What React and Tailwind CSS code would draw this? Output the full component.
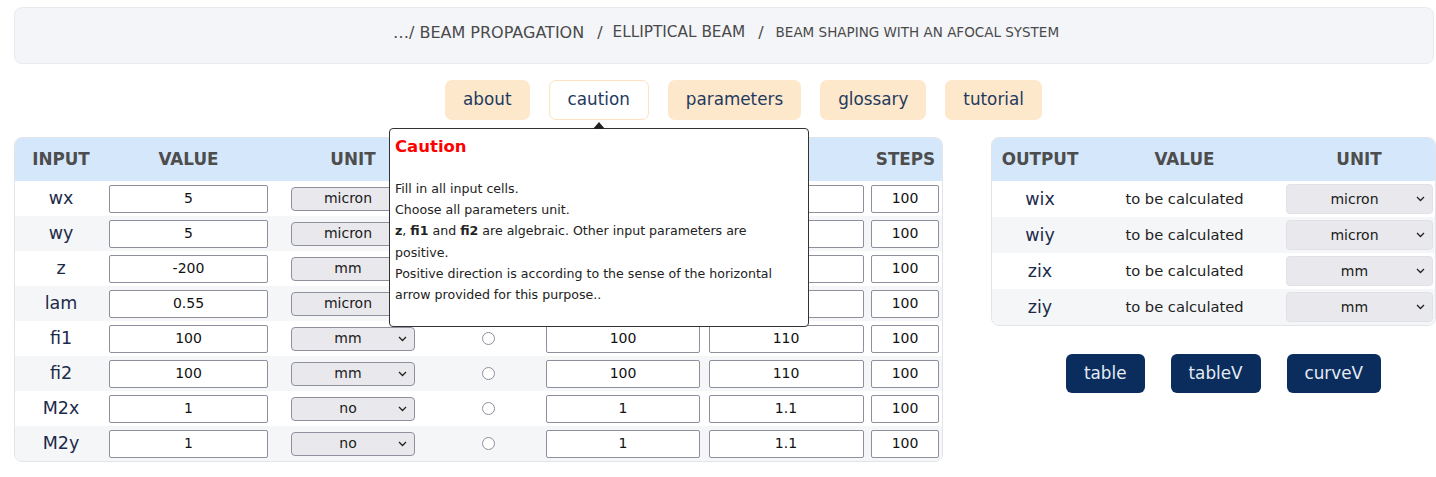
import React from "react";

const font = { fontFamily: '"DejaVu Sans", "Liberation Sans", sans-serif' };

function Chevron() {
  return (
    <svg width="9" height="6" viewBox="0 0 9 6" className="absolute right-[7px] top-1/2 -translate-y-1/2">
      <path d="M1 1 L4.5 4.5 L8 1" fill="none" stroke="#222" strokeWidth="1.3" />
    </svg>
  );
}

function Select({ value, w = "w-[124px]", h = "h-[24px]", border = "border-[#8f8f9d]" }) {
  return (
    <div className={`relative ${w} ${h} bg-[#e9e9ed] border ${border} rounded-[4px] flex items-center justify-center text-[14px] text-[#1a1a1a]`}>
      <span className="pr-[10px]">{value}</span>
      <Chevron />
    </div>
  );
}

function Input({ value, w }) {
  return (
    <div className={`${w} h-[28px] bg-white border border-[#8f8f9d] rounded-[2px] flex items-center justify-center text-[14px] text-[#111]`}>
      {value}
    </div>
  );
}

function Radio() {
  return <div className="w-[13px] h-[13px] rounded-full border border-[#8f8f9d] bg-white" />;
}

const inputRows = [
  ["wx", "5", "micron", "", "", "100"],
  ["wy", "5", "micron", "", "", "100"],
  ["z", "-200", "mm", "", "", "100"],
  ["lam", "0.55", "micron", "", "", "100"],
  ["fi1", "100", "mm", "100", "110", "100"],
  ["fi2", "100", "mm", "100", "110", "100"],
  ["M2x", "1", "no", "1", "1.1", "100"],
  ["M2y", "1", "no", "1", "1.1", "100"],
];

const outputRows = [
  ["wix", "micron"],
  ["wiy", "micron"],
  ["zix", "mm"],
  ["ziy", "mm"],
];

const inCols = "grid grid-cols-[92px_163px_166px_105px_164px_162px_77px]";
const outCols = "grid grid-cols-[96px_193px_156px]";

export default function App() {
  return (
    <div className="w-[1436px] h-[477px] bg-white overflow-hidden relative" style={font}>
      {/* breadcrumb */}
      <div className="ml-[14px] mr-[2px] mt-[7px] h-[57px] pb-[6px] pl-[4px] bg-[#f4f5f9] border border-[#e8eaef] rounded-[8px] flex items-center justify-center text-[#4a4a4a]">
        <span className="text-[16px]">…/ BEAM PROPAGATION</span>
        <span className="text-[16px] ml-[13px] mr-[10px]">/</span>
        <span className="text-[15.3px]">ELLIPTICAL BEAM</span>
        <span className="text-[16px] ml-[13px] mr-[12px]">/</span>
        <span className="text-[13.5px]">BEAM SHAPING WITH AN AFOCAL SYSTEM</span>
      </div>

      {/* tabs */}
      <div className="mt-[16px] flex justify-center gap-[19px] pl-[51px]">
        {["about", "caution", "parameters", "glossary", "tutorial"].map((t) => (
          <div
            key={t}
            className={`h-[40px] px-[18px] rounded-[7px] flex items-center text-[16.8px] text-[#1f3a60] ${
              t === "caution" ? "bg-white border border-[#fbe3c2]" : "bg-[#fde8cb]"
            }`}
          >
            {t}
          </div>
        ))}
      </div>

      {/* main */}
      <div className="mt-[17px] ml-[14px] flex gap-[48px] items-start">
        {/* input table */}
        <div className="w-[929px] border border-[#e1e4e9] rounded-[8px] overflow-hidden">
          <div className={`${inCols} h-[43px] bg-[#d5e7fb] items-center text-[16.8px] font-bold text-[#4d4d4d]`}>
            <div className="text-center">INPUT</div>
            <div className="text-center">VALUE</div>
            <div className="text-center">UNIT</div>
            <div className="text-center">VAR</div>
            <div className="text-center">MIN</div>
            <div className="text-center">MAX</div>
            <div className="text-center">STEPS</div>
          </div>
          {inputRows.map((r, i) => (
            <div
              key={r[0]}
              className={`${inCols} h-[35px] items-center ${i % 2 ? "bg-[#f5f6f8]" : "bg-white"}`}
            >
              <div className="text-center text-[17.5px] text-[#1c2b4a]">{r[0]}</div>
              <div className="flex justify-center"><Input value={r[1]} w="w-[159px]" /></div>
              <div className="flex justify-center"><Select value={r[2]} /></div>
              <div className="flex justify-center"><Radio /></div>
              <div className="flex justify-center"><Input value={r[3]} w="w-[154px]" /></div>
              <div className="flex justify-center"><Input value={r[4]} w="w-[155px]" /></div>
              <div className="flex justify-start pl-[4px]"><Input value={r[5]} w="w-[68px]" /></div>
            </div>
          ))}
        </div>

        {/* output */}
        <div className="flex flex-col">
          <div className="w-[445px] border border-[#e1e4e9] rounded-[8px] overflow-hidden">
            <div className={`${outCols} h-[43px] bg-[#d5e7fb] items-center text-[16.8px] font-bold text-[#4d4d4d]`}>
              <div className="text-center">OUTPUT</div>
              <div className="text-center">VALUE</div>
              <div className="text-center">UNIT</div>
            </div>
            {outputRows.map((r, i) => (
              <div key={r[0]} className={`${outCols} h-[36px] items-center ${i % 2 ? "bg-[#f5f6f8]" : "bg-white"}`}>
                <div className="text-center text-[17.5px] text-[#1c2b4a]">{r[0]}</div>
                <div className="text-center text-[14.7px] text-[#222]">to be calculated</div>
                <div className="flex justify-start pl-[5px]">
                  <Select value={r[1]} w="w-[147px]" h="h-[30px]" border="border-[#e0e0e6]" />
                </div>
              </div>
            ))}
          </div>
          <div className="mt-[28px] flex justify-center gap-[26px] pl-[20px]">
            {["table", "tableV", "curveV"].map((b) => (
              <div key={b} className="h-[39px] px-[18px] rounded-[6px] bg-[#0a2d5e] text-[#e4ebf3] text-[16.8px] flex items-center">
                {b}
              </div>
            ))}
          </div>
        </div>
      </div>

      {/* caution popup */}
      <div className="absolute left-[389px] top-[128px] w-[420px] h-[199px] bg-white border border-[#333] rounded-[4px] px-[5px] pt-[6px]">
        <div className="absolute left-[203px] -top-[7px] w-0 h-0 border-l-[6px] border-r-[6px] border-b-[7px] border-l-transparent border-r-transparent border-b-[#222]" />
        <div className="text-[16.5px] leading-[24px] font-bold text-[#ff0000]">Caution</div>
        <div className="mt-[19px] text-[12.6px] leading-[21.2px] text-[#222] whitespace-nowrap">
          <div>Fill in all input cells.</div>
          <div>Choose all parameters unit.</div>
          <div>
            <b>z</b>, <b>fi1</b> and <b>fi2</b> are algebraic. Other input parameters are
          </div>
          <div>positive.</div>
          <div>Positive direction is according to the sense of the horizontal</div>
          <div>arrow provided for this purpose..</div>
        </div>
      </div>
    </div>
  );
}
